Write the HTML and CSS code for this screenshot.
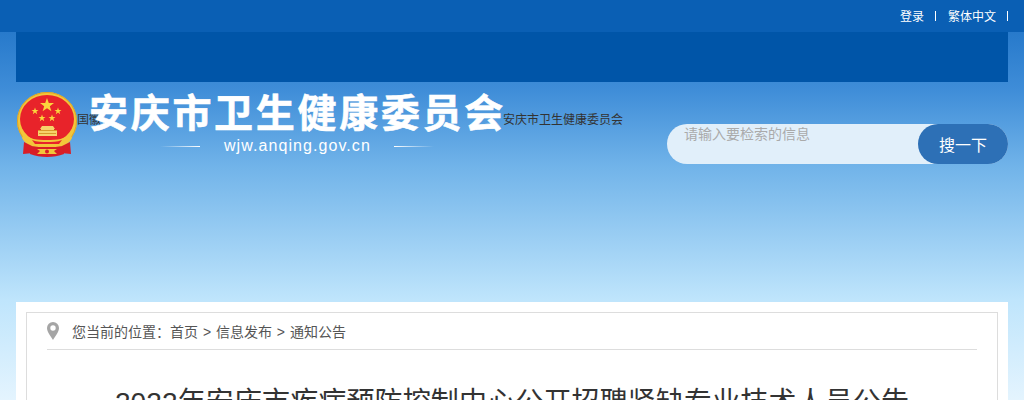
FILE: index.html
```html
<!DOCTYPE html>
<html>
<head>
    <meta charset="utf-8">
    <title>安庆市卫生健康委员会</title>
    <link rel="stylesheet" href="styles.css">
</head>
<body>
    <div class="top-bar">
        <a class="top-link">登录</a>
        <span class="top-sep"></span>
        <a class="top-link">繁体中文</a>
        <span class="top-sep"></span>
    </div>
    <div class="nav-bar"></div>

    <div class="header">
        <svg class="emblem" viewBox="0 0 60 66">
            <ellipse cx="30" cy="29" rx="30" ry="29" fill="#f3c63a"/>
            <ellipse cx="30" cy="29" rx="29.500" ry="28.500" fill="none" stroke="#dda326" stroke-width="1"/>
            <ellipse cx="30" cy="27" rx="27" ry="24" fill="#e8232a"/>
            <polygon points="30,6 31.800,11 37,11 32.800,14.200 34.400,19.200 30,16.200 25.600,19.200 27.200,14.200 23,11 28.200,11" fill="#fbd63c"/>
            <polygon points="18,15.500 18.900,18 21.500,18 19.400,19.600 20.200,22.200 18,20.600 15.800,22.200 16.600,19.600 14.500,18 17.100,18" fill="#fbd63c"/>
            <polygon points="41,15.500 41.900,18 44.500,18 42.400,19.600 43.200,22.200 41,20.600 38.800,22.200 39.600,19.600 37.500,18 40.100,18" fill="#fbd63c"/>
            <polygon points="25,22.500 25.900,25 28.500,25 26.400,26.600 27.200,29.200 25,27.600 22.800,29.200 23.600,26.600 21.500,25 24.100,25" fill="#fbd63c"/>
            <polygon points="35,22.500 35.900,25 38.500,25 36.400,26.600 37.200,29.200 35,27.600 32.800,29.200 33.600,26.600 31.500,25 34.100,25" fill="#fbd63c"/>
            <path d="M25 34h11l2 3h-1v2h3v5H21v-5h3v-2h-1z" fill="#f6d36a"/>
            <path d="M21 38h19v1H21zM22 41h17v1H22z" fill="#d99a2a"/>
            <path d="M7 42c5 5 13 6 23 6s18-1 23-6l2 4c-2 4-5 6-8 8-5 1-11 1-17 1s-12 0-17-1c-3-2-6-4-8-8z" fill="#f3c63a"/>
            <path d="M15 48c5 2 10 2 15 2s10 0 15-2l-3 4H18z" fill="#e8232a"/>
            <path d="M7 50l8 4 1 7-10 1z M53 50l-8 4-1 7 10 1z" fill="#d81e26"/>
            <path d="M14 54c5 1 10 1 16 1s11 0 16-1l1 8c-5 2-11 3-17 3s-12-1-17-3z" fill="#d81e26"/>
            <path d="M20 57h20l-3 2 3 3H20l3-3z" fill="#f3c63a"/>
            <circle cx="30" cy="59.500" r="2" fill="#d81e26"/>
        </svg>
        <span class="emblem-alt">国徽</span>
        <div class="logo">
            <div class="logo-name">安庆市卫生健康委员会</div>
            <div class="logo-site">
                <span class="logo-line logo-line-left"></span>
                <span class="logo-url">wjw.anqing.gov.cn</span>
                <span class="logo-line logo-line-right"></span>
            </div>
        </div>
        <span class="logo-alt">安庆市卫生健康委员会</span>
        <div class="search">
            <span class="search-input">请输入要检索的信息</span>
            <button class="search-btn">搜一下</button>
        </div>
    </div>

    <div class="main">
        <div class="panel">
            <div class="crumb">
                <svg class="pin" viewBox="0 0 12 18">
                    <path fill-rule="evenodd" d="M6 0a6 6 0 0 1 6 6c0 4-3.600 8-6 12C3.600 14 0 10 0 6a6 6 0 0 1 6-6zm0 3.300a2.700 2.700 0 1 0 0 5.400 2.700 2.700 0 0 0 0-5.400z" fill="#a5a5a5"/>
                </svg>
                <span>您当前的位置：首页 &gt; 信息发布 &gt; 通知公告</span>
            </div>
            <h1 class="article-title">2022年安庆市疾病预防控制中心公开招聘紧缺专业技术人员公告</h1>
        </div>
    </div>
</body>
</html>
```

FILE: styles.css
```css
html, body {
    height: 400px;
    overflow: hidden;
}
body {
    margin: 0;
    font-family: "Liberation Sans", "Noto Sans CJK SC", sans-serif;
    font-size: 12px;
    color: #333;
    background: linear-gradient(to bottom, #1a6fc4 0, #3f8dd8 90px, #70b3e9 165px, #bfe5fc 300px, #e4f4fe 400px);
}
.top-bar {
    height: 31px;
    padding-bottom: 1px;
    background-color: #0a5fb4;
    display: flex;
    justify-content: flex-end;
    align-items: center;
    padding-right: 16px;
}
.top-link {
    color: #fff;
    font-size: 12px;
}
.top-sep {
    width: 1px;
    height: 10px;
    background-color: #fff;
    margin-left: 11px;
    margin-right: 12px;
}
.top-sep:last-child {
    margin-right: 0;
}
.nav-bar {
    height: 50px;
    margin: 0 16px;
    background-color: #0055a8;
}
.header {
    height: 220px;
    margin: 0 16px 0 17px;
    display: flex;
    align-items: flex-start;
}
.emblem {
    width: 60px;
    height: 66px;
    margin-top: 10px;
    flex-shrink: 0;
}
.emblem-alt {
    width: 13px;
    margin-top: 30px;
    white-space: nowrap;
    line-height: 17px;
}
.logo {
    width: 413px;
    margin-top: 8px;
    color: #fff;
}
.logo-name {
    margin-left: -1px;
    font-size: 39px;
    font-weight: bold;
    letter-spacing: 2.7px;
    -webkit-text-stroke: 0.6px #fff;
    line-height: 48px;
    white-space: nowrap;
}
.logo-site {
    display: flex;
    align-items: center;
    height: 22px;
    margin-top: -3px;
}
.logo-url {
    font-size: 16px;
    letter-spacing: 1.07px;
    margin: 0 23px 0 24px;
    white-space: nowrap;
}
.logo-line {
    height: 1px;
    width: 40px;
    margin-left: 70px;
    background: linear-gradient(to right, rgba(255,255,255,0), #fff);
}
.logo-line-right {
    margin-left: 0;
    background: linear-gradient(to right, #fff, rgba(255,255,255,0));
}
.logo-alt {
    margin-top: 30px;
    line-height: 17px;
    white-space: nowrap;
}
.search {
    width: 341px;
    height: 40px;
    margin-top: 42px;
    margin-left: auto;
    border-radius: 20px;
    background-color: #e1effa;
    display: flex;
    justify-content: space-between;
}
.search-input {
    padding: 2px 0 0 17px;
    font-size: 14px;
    line-height: 17px;
    color: #aaa;
}
.search-btn {
    width: 90px;
    height: 40px;
    border: none;
    border-radius: 20px;
    background-color: #2d70b6;
    color: #fff;
    font-family: inherit;
    font-size: 16px;
}
.main {
    margin: 0 16px;
    padding: 10px;
    background-color: #fff;
}
.panel {
    border: 1px solid #ddd;
    padding: 0 20px;
}
.crumb {
    height: 36px;
    border-bottom: 1px solid #ddd;
    display: flex;
    align-items: center;
    font-size: 14px;
    word-spacing: 1px;
    color: #555;
}
.pin {
    width: 12px;
    height: 18px;
    margin-right: 13px;
}
.article-title {
    margin: 33px 0 0;
    font-size: 28px;
    font-weight: normal;
    letter-spacing: 0.13px;
    line-height: 40px;
    text-align: center;
    white-space: nowrap;
}
```
